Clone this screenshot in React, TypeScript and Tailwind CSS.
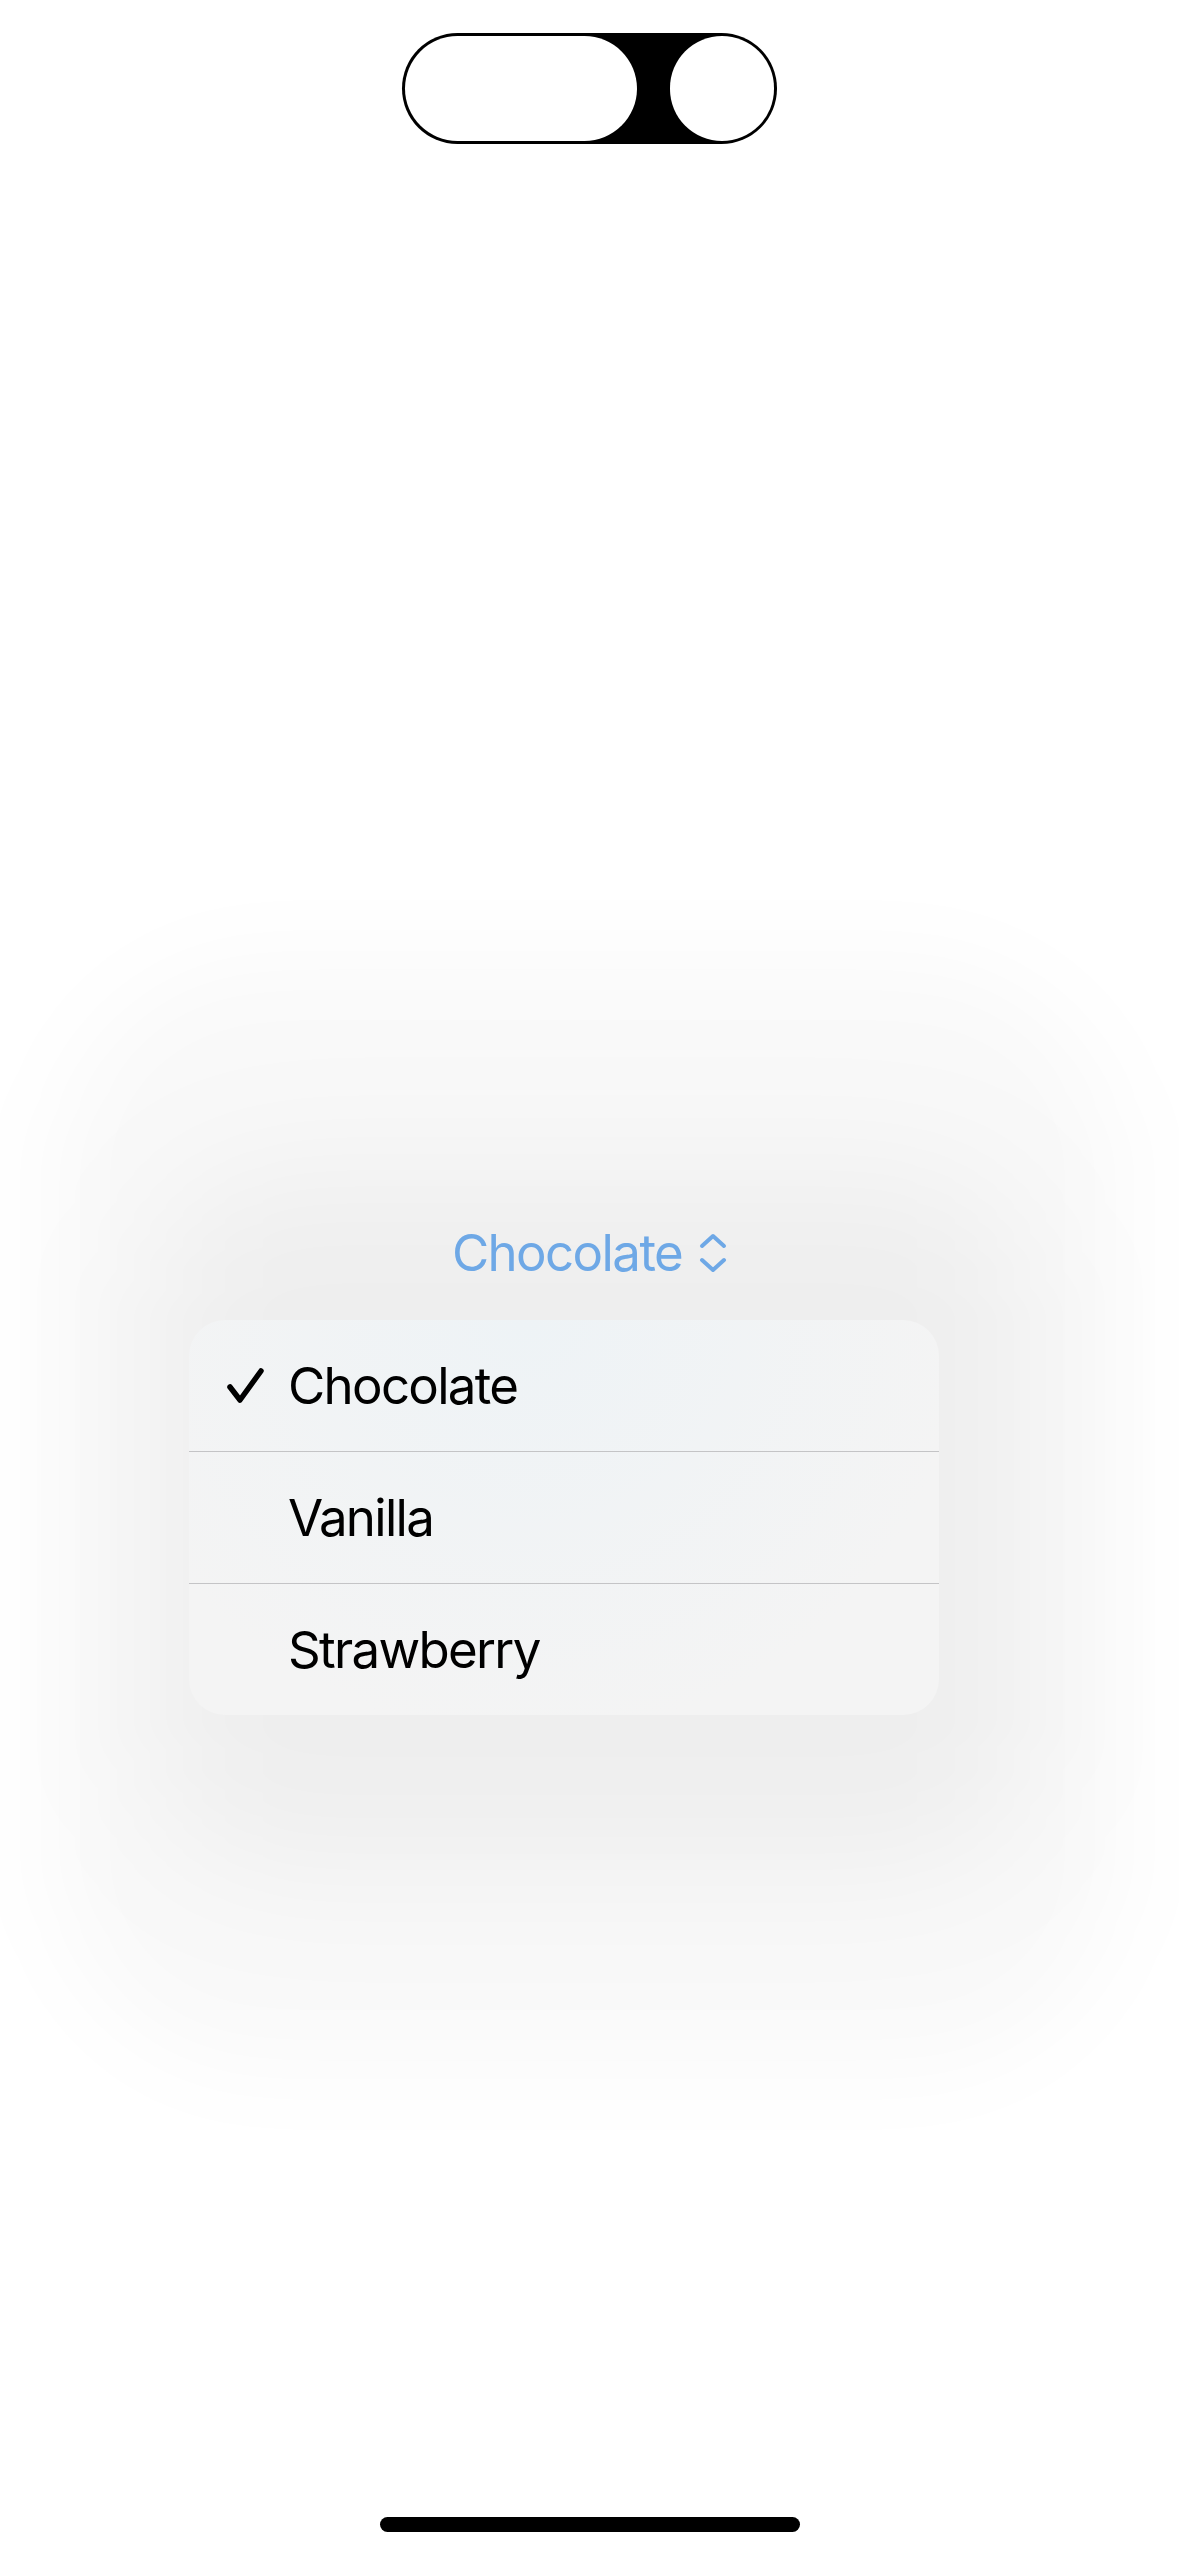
import React from "react";

function Check() {
  return (
    <svg width="38" height="36" viewBox="0 0 38 36" fill="none">
      <path d="M3 19 L13 32 L34 3" stroke="#000" strokeWidth="5.5" strokeLinecap="round" strokeLinejoin="round" />
    </svg>
  );
}

function UpDown() {
  return (
    <svg width="28" height="40" viewBox="0 0 28 40" fill="none">
      <path d="M3 13 L14 3 L25 13" stroke="#6ea8e6" strokeWidth="4" strokeLinecap="round" strokeLinejoin="round" />
      <path d="M3 27 L14 37 L25 27" stroke="#6ea8e6" strokeWidth="4" strokeLinecap="round" strokeLinejoin="round" />
    </svg>
  );
}

export default function App() {
  const items = ["Chocolate", "Vanilla", "Strawberry"];
  return (
    <div className="relative w-[1179px] h-[2556px] bg-white overflow-hidden font-['Inter',sans-serif]">
      <div className="absolute left-[50px] top-[960px] w-[1075px] h-[1110px] rounded-[220px] bg-black/[0.025] blur-[45px]" />
      <div className="absolute left-[150px] top-[1170px] w-[880px] h-[700px] rounded-[120px] bg-black/[0.045] blur-[70px]" />
      <div className="relative flex flex-col h-full">
        <div className="flex justify-center pt-[33px]">
          <div className="flex items-center justify-between bg-black rounded-full w-[375px] h-[111px] p-[3px]">
            <div className="bg-white rounded-full w-[232px] h-[105px]" />
            <div className="bg-white rounded-full w-[104px] h-[105px]" />
          </div>
        </div>
        <div className="flex justify-center items-center gap-[17px] mt-[1079px] h-[60px]">
          <span className="text-[51px] leading-[60px] text-[#6ea8e6] tracking-[-1.6px]">Chocolate</span>
          <UpDown />
        </div>
        <div className="ml-[189px] mt-[37px] w-[750px] rounded-[36px] overflow-hidden bg-[radial-gradient(ellipse_at_45%_0%,#eef3f6,#f4f4f4_75%)]">
          {items.map((it, i) => (
            <div key={it}>
              {i > 0 && <div className="h-px bg-[#c4c4c6]" />}
              <div className="flex items-center h-[131px]">
                <div className="w-[99px] flex pl-[38px]">{i === 0 && <Check />}</div>
                <span className="text-[51px] leading-[60px] text-black tracking-[-1.7px]">{it}</span>
              </div>
            </div>
          ))}
        </div>
        <div className="mt-auto mb-[24px] flex justify-center">
          <div className="w-[420px] h-[15px] rounded-full bg-black" />
        </div>
      </div>
    </div>
  );
}
